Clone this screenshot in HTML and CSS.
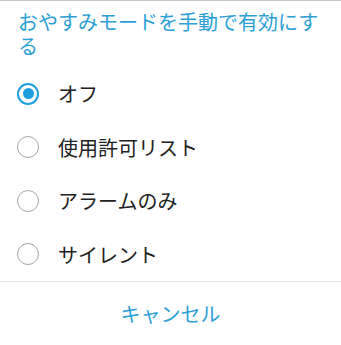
FILE: index.html
```html
<!DOCTYPE html>
<html lang="ja">
<head>
    <meta charset="UTF-8">
    <meta name="viewport" content="width=device-width, initial-scale=1.0">
    <title>おやすみモード</title>
    <link rel="stylesheet" href="styles.css">
</head>
<body>

    <div class="dialog">
        <h1 class="dialog-title">おやすみモードを手動で有効にする</h1>

        <!-- 選択肢 -->
        <ul class="option-list">
            <li class="option checked"><span class="radio"></span><span class="option-label">オフ</span></li>
            <li class="option"><span class="radio"></span><span class="option-label">使用許可リスト</span></li>
            <li class="option"><span class="radio"></span><span class="option-label">アラームのみ</span></li>
            <li class="option"><span class="radio"></span><span class="option-label">サイレント</span></li>
        </ul>

        <div class="dialog-actions">
            <button class="cancel-button">キャンセル</button>
        </div>
    </div>

</body>
</html>
```

FILE: styles.css
```css
body {
    font-family: "Noto Sans CJK JP", "Noto Sans", sans-serif;
    margin: 0;
    padding: 0;
    background-color: #fff;
}
.dialog {
    border-top: 1px solid #c8c8c8;
    height: 344px;
    display: flex;
    flex-direction: column;
}
.dialog-title {
    margin: 0;
    padding: 9px 20px 0 18px;
    font-size: 20px;
    font-weight: normal;
    line-height: 24px;
    color: #2b9fd6;
}
.option-list {
    list-style-type: none;
    margin: 9px 0 0;
    padding: 0;
    border-bottom: 1px solid #e2e2e2;
}
.option {
    height: 53.5px;
    display: flex;
    align-items: center;
    padding-left: 17px;
}
.radio {
    width: 22px;
    height: 22px;
    box-sizing: border-box;
    border: 1.5px solid #a6a6a6;
    border-radius: 50%;
    margin-right: 19px;
    display: flex;
    justify-content: center;
    align-items: center;
}
.option.checked .radio {
    border: 2.5px solid #1f9fe0;
}
.option.checked .radio::after {
    content: "";
    width: 11px;
    height: 11px;
    border-radius: 50%;
    background-color: #1f9fe0;
}
.option-label {
    font-size: 20px;
    color: #222;
}
.dialog-actions {
    flex: 1;
    display: flex;
    justify-content: center;
    align-items: center;
}
.cancel-button {
    background: none;
    border: none;
    padding: 0;
    font-family: inherit;
    font-size: 20px;
    color: #2b9fd6;
    cursor: pointer;
}
```
